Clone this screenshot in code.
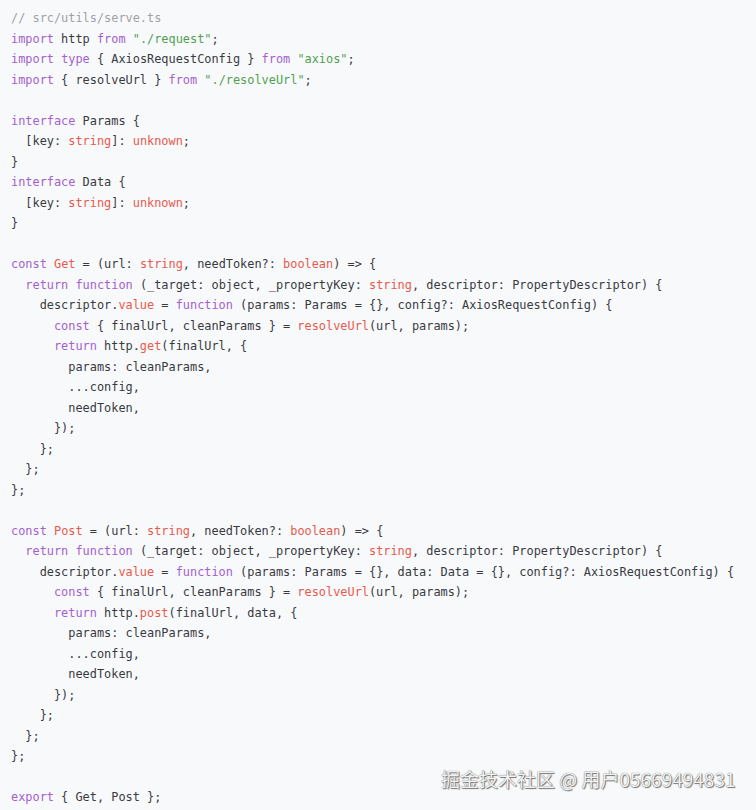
import React from "react";

type Tok = [string, string];

const K = "text-[#a45fd0]"; // keywords
const R = "text-[#e8594c]"; // types / names
const S = "text-[#50a14f]"; // strings
const C = "text-[#a0a1a7]"; // comments
const D = ""; // default

const lines: Tok[][] = [
  [[C, "// src/utils/serve.ts"]],
  [[K, "import"], [D, " http "], [K, "from"], [D, " "], [S, '"./request"'], [D, ";"]],
  [[K, "import"], [D, " "], [K, "type"], [D, " { AxiosRequestConfig } "], [K, "from"], [D, " "], [S, '"axios"'], [D, ";"]],
  [[K, "import"], [D, " { resolveUrl } "], [K, "from"], [D, " "], [S, '"./resolveUrl"'], [D, ";"]],
  [],
  [[K, "interface"], [D, " Params {"]],
  [[D, "  [key: "], [R, "string"], [D, "]: "], [R, "unknown"], [D, ";"]],
  [[D, "}"]],
  [[K, "interface"], [D, " Data {"]],
  [[D, "  [key: "], [R, "string"], [D, "]: "], [R, "unknown"], [D, ";"]],
  [[D, "}"]],
  [],
  [[K, "const"], [D, " "], [R, "Get"], [D, " = (url: "], [R, "string"], [D, ", needToken?: "], [R, "boolean"], [D, ") => {"]],
  [[D, "  "], [K, "return"], [D, " "], [K, "function"], [D, " (_target: object, _propertyKey: "], [R, "string"], [D, ", descriptor: PropertyDescriptor) {"]],
  [[D, "    descriptor."], [R, "value"], [D, " = "], [K, "function"], [D, " (params: Params = {}, config?: AxiosRequestConfig) {"]],
  [[D, "      "], [K, "const"], [D, " { finalUrl, cleanParams } = "], [R, "resolveUrl"], [D, "(url, params);"]],
  [[D, "      "], [K, "return"], [D, " http."], [R, "get"], [D, "(finalUrl, {"]],
  [[D, "        params: cleanParams,"]],
  [[D, "        ...config,"]],
  [[D, "        needToken,"]],
  [[D, "      });"]],
  [[D, "    };"]],
  [[D, "  };"]],
  [[D, "};"]],
  [],
  [[K, "const"], [D, " "], [R, "Post"], [D, " = (url: "], [R, "string"], [D, ", needToken?: "], [R, "boolean"], [D, ") => {"]],
  [[D, "  "], [K, "return"], [D, " "], [K, "function"], [D, " (_target: object, _propertyKey: "], [R, "string"], [D, ", descriptor: PropertyDescriptor) {"]],
  [[D, "    descriptor."], [R, "value"], [D, " = "], [K, "function"], [D, " (params: Params = {}, data: Data = {}, config?: AxiosRequestConfig) {"]],
  [[D, "      "], [K, "const"], [D, " { finalUrl, cleanParams } = "], [R, "resolveUrl"], [D, "(url, params);"]],
  [[D, "      "], [K, "return"], [D, " http."], [R, "post"], [D, "(finalUrl, data, {"]],
  [[D, "        params: cleanParams,"]],
  [[D, "        ...config,"]],
  [[D, "        needToken,"]],
  [[D, "      });"]],
  [[D, "    };"]],
  [[D, "  };"]],
  [[D, "};"]],
  [],
  [[K, "export"], [D, " { Get, Post };"]],
];

export default function App() {
  return (
    <div className="relative h-[810px] w-[756px] overflow-hidden bg-[#f8f9fb]">
      <pre className="pl-[11px] pt-[8px] font-['DejaVu_Sans_Mono',monospace] text-[11.9px] leading-[20.5px] text-[#383a42]">
        {lines.map((line, i) => (
          <div key={i} className="h-[20.5px] whitespace-pre">
            {line.map(([cls, txt], j) => (
              <span key={j} className={cls}>
                {txt}
              </span>
            ))}
          </div>
        ))}
      </pre>
      {/* watermark */}
      <div className="absolute left-[441px] top-[766px] whitespace-nowrap font-['Noto_Sans_CJK_SC',sans-serif] text-[19px] leading-[26px] text-[#f2f2f2] [text-shadow:0_0_1px_#555,1px_1px_1px_#777]">
        掘金技术社区 @ 用户05669494831
      </div>
    </div>
  );
}
